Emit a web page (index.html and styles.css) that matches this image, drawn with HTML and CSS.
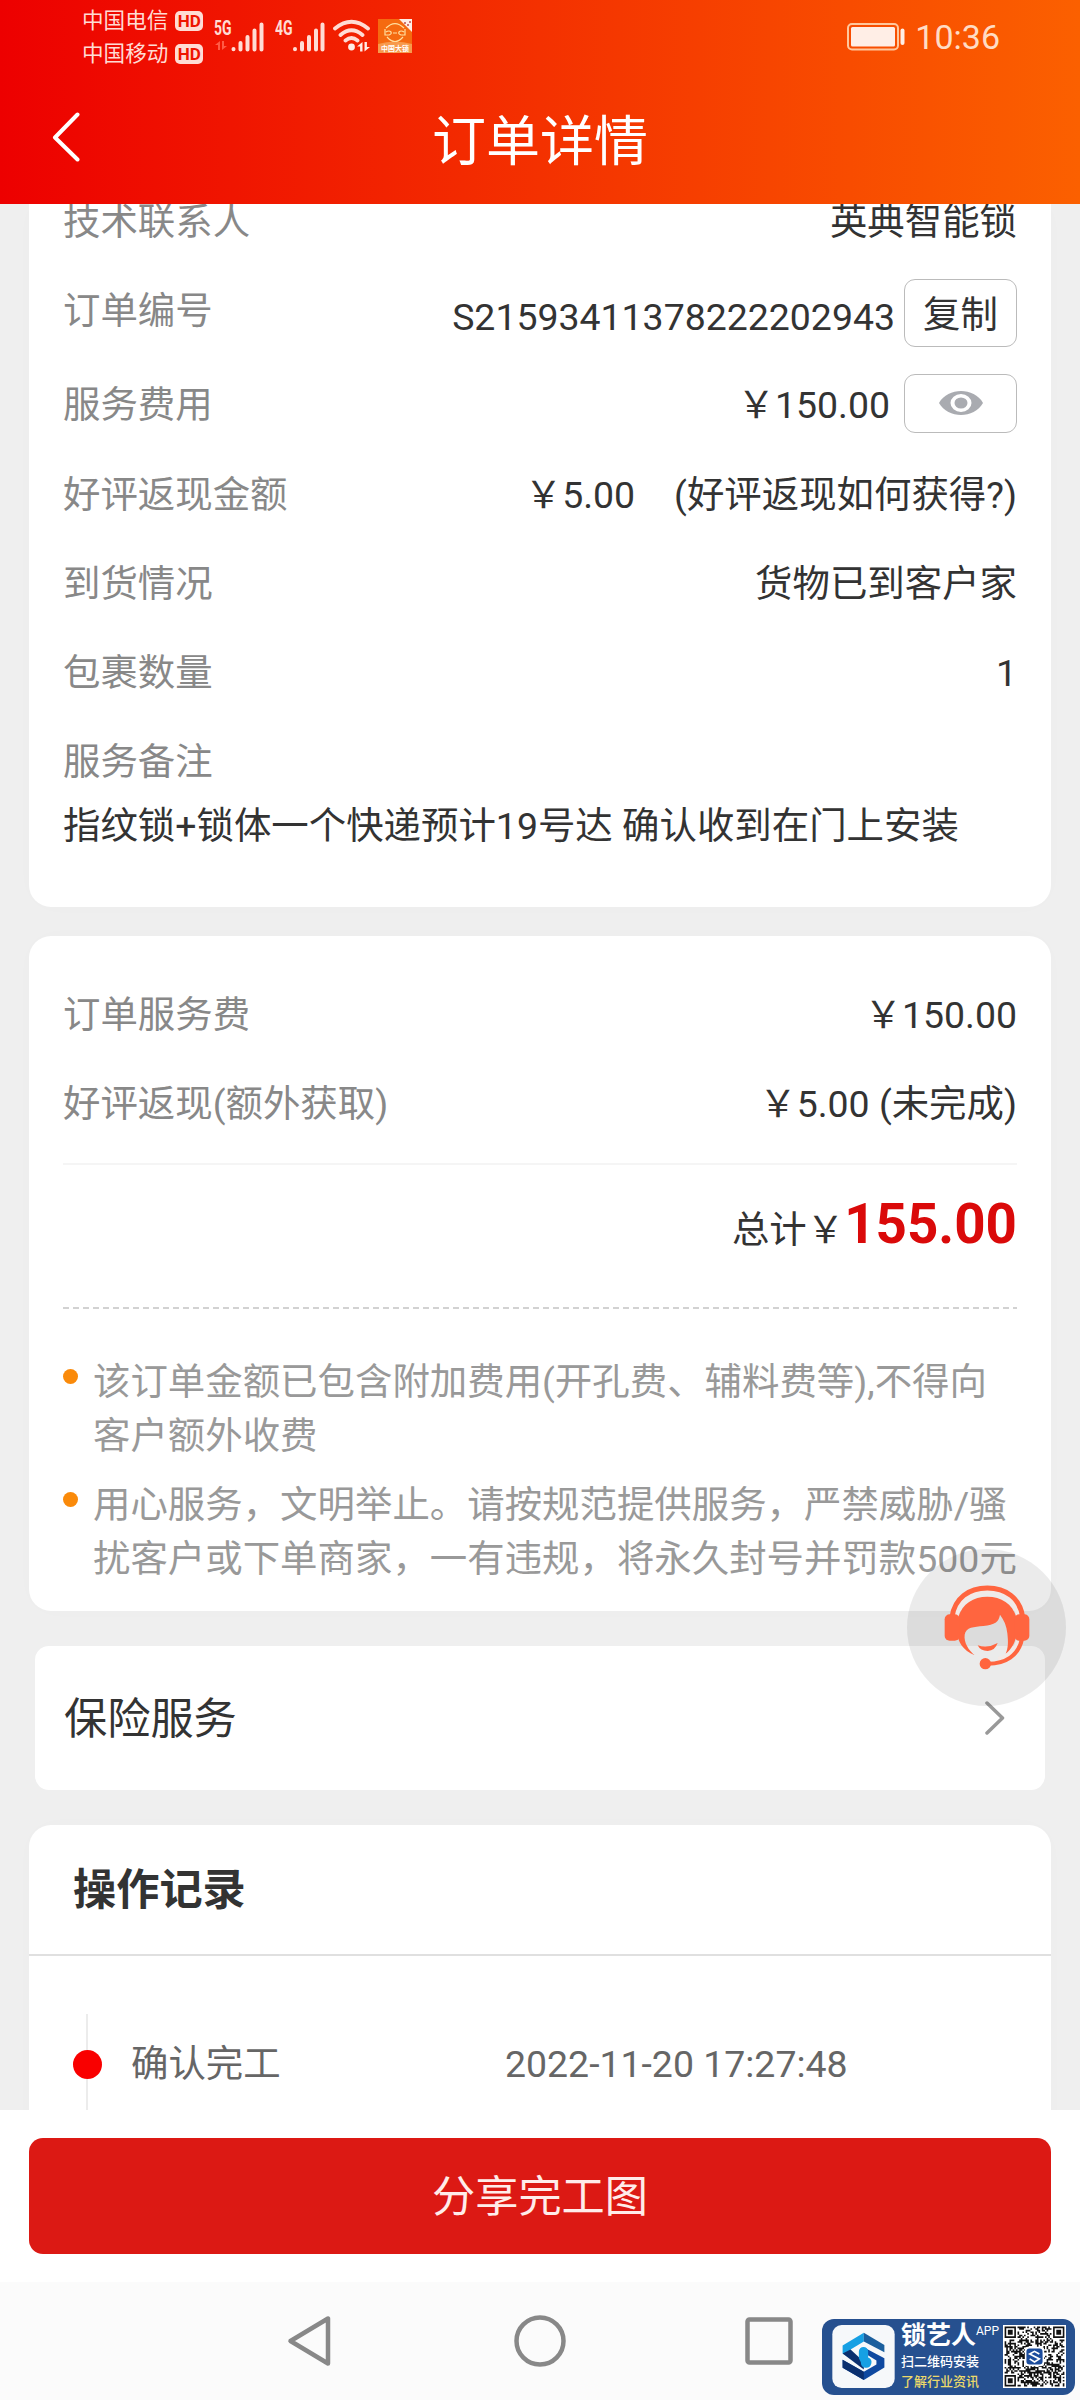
FILE: index.html
```html
<!DOCTYPE html>
<html lang="zh-CN">
<head>
<meta charset="utf-8">
<title>订单详情</title>
<link rel="stylesheet" href="styles.css">
</head>
<body>
<div class="phone">
  <header class="header">
    <div class="status">
      <div class="carriers">
        <div class="carrier">中国电信<span class="hd">HD</span></div>
        <div class="carrier">中国移动<span class="hd">HD</span></div>
      </div>
      <div class="signal">
        <span class="net">5G</span>
        <svg class="bars" width="50" height="32" viewBox="0 0 50 32">
          <g class="bar-line"><path d="M19.500 28v.3M26.500 22v6.500M33.500 16v12.500M40.500 9.500v19M47.500 3.500v25"/></g>
          <path class="data-faint" d="M6 20v9H4v-5H1zM8 29v-9h2v5h3z"/>
        </svg>
      </div>
      <div class="signal">
        <span class="net">4G</span>
        <svg class="bars" width="50" height="32" viewBox="0 0 50 32">
          <g class="bar-line"><path d="M20 28v.3M27 22v6.500M34 16v12.500M41 9.500v19M47.500 3.500v25"/></g>
        </svg>
      </div>
      <svg class="wifi" width="38" height="34" viewBox="0 0 38 34">
        <g class="wifi-arc"><path d="M2 10.500Q18.500-3 35 10.500M7.500 17q11-9.500 22 0M12.500 22.500q6-5 12 0"/></g>
        <circle class="light" cx="18.500" cy="29" r="3.400"/>
        <path class="light" d="M29.500 24v9.500h-2.400v-5H24zM31.500 33.500V24h2.400v5H37z"/>
      </svg>
      <svg class="app-mini" width="34" height="34" viewBox="0 0 34 34">
        <rect class="mini-bg" width="34" height="34"/>
        <path class="mini-strip" d="M0 25q17-5 34 0v9H0z"/>
        <path class="light" d="M21 0h13v13z"/>
        <g class="mini-line"><path d="M8 9q9-9 18 0M9 18q8 9 16 0M7 10v6h4q3-1 2-3-2-2-5 0M27 10v6h-4q-3-1-2-3 2-2 5 0M15 14h4"/></g>
        <path class="mini-dots" d="M26 3h2v2h-2zM29 5h2v2h-2zM31 2h2v2h-2z"/>
        <text class="mini-text" x="17" y="32" text-anchor="middle">中国大锁</text>
      </svg>
      <div class="status-right">
        <svg width="60" height="28" viewBox="0 0 60 28">
          <rect class="bat-case" x="1" y="1" width="50" height="25.500" rx="4"/>
          <rect class="light" x="4" y="4" width="44" height="19.500" rx="1.500"/>
          <rect class="light" x="53.500" y="5.500" width="4" height="16.500" rx="2"/>
        </svg>
        <span class="clock">10:36</span>
      </div>
    </div>
    <div class="titlebar">
      <svg class="back" width="28" height="50" viewBox="0 0 28 50"><path d="M25.500 2.500L3 25.500l22.500 22"/></svg>
      <h1 class="title">订单详情</h1>
    </div>
  </header>

  <main class="content">
    <section class="card info">
      <div class="row"><span class="label">技术联系人</span><span>英典智能锁</span></div>
      <div class="row row-no"><span class="label">订单编号</span><span class="value-group order-no"><span class="lowered">S21593411378222202943</span><button class="btn-copy">复制</button></span></div>
      <div class="row row-fee"><span class="label">服务费用</span><span class="value-group fee"><span>￥150.00</span><button class="btn-eye">
        <svg width="44" height="24" viewBox="0 0 44 28" preserveAspectRatio="none"><path class="eye" d="M0 14C9-4.500 35-4.500 44 14 35 32.500 9 32.500 0 14z"/><circle class="eye-ring" cx="22" cy="14" r="8.500"/></svg>
      </button></span></div>
      <div class="row"><span class="label">好评返现金额</span><span class="value-group cashback"><span>￥5.00</span><span>(好评返现如何获得?)</span></span></div>
      <div class="row"><span class="label">到货情况</span><span>货物已到客户家</span></div>
      <div class="row"><span class="label">包裹数量</span><span>1</span></div>
      <div class="row"><span class="label">服务备注</span></div>
      <p class="remark">指纹锁+锁体一个快递预计19号达 确认收到在门上安装</p>
    </section>

    <section class="card bill">
      <div class="row"><span class="label">订单服务费</span><span>￥150.00</span></div>
      <div class="row"><span class="label">好评返现(额外获取)</span><span>￥5.00 (未完成)</span></div>
      <div class="total"><span>总计￥</span><strong class="sum">155.00</strong></div>
      <div class="dashes"></div>
      <ul class="notes">
        <li>该订单金额已包含附加费用(开孔费、辅料费等),不得向<br>客户额外收费</li>
        <li>用心服务，文明举止。请按规范提供服务，严禁威胁/骚<br>扰客户或下单商家，一有违规，将永久封号并罚款500元</li>
      </ul>
    </section>

    <section class="insurance">
      <span>保险服务</span>
      <svg width="20" height="34" viewBox="0 0 20 34"><path class="chev" d="M2 2l15.500 15L2 32"/></svg>
    </section>

    <section class="card log">
      <h2 class="log-title">操作记录</h2>
      <div class="log-item">
        <span class="track"><i class="dot"></i></span>
        <span class="log-name">确认完工</span>
        <span>2022-11-20 17:27:48</span>
      </div>
    </section>
  </main>

  <footer class="action"><button class="share">分享完工图</button></footer>

  <nav class="nav">
    <svg width="48" height="54" viewBox="0 0 48 54"><path d="M4.500 27L42 4.500v45z"/></svg>
    <svg width="54" height="54" viewBox="0 0 54 54"><circle cx="27" cy="27" r="23.500"/></svg>
    <svg width="48" height="54" viewBox="0 0 48 54"><rect x="2.500" y="5.500" width="43" height="43" rx="2"/></svg>
  </nav>

  <div class="service">
    <svg width="86" height="86" viewBox="160 166 258 258">
      <path class="gap" d="M196 258Q215 190 290 184t94 74"/>
      <path class="band" d="M184 262C192 205 235 175 290 175s98 30 106 87"/>
      <path class="hot" d="M203 262C215 222 248 201 290 201s75 21 87 61v48c0 25-14 48-32 63 8-20 8-35 5-62-2-22-10-40-22-56-4 22-15 30-50 34-28 3-52 3-56 26-3 24 12 46 30 62-35-14-52-43-52-67z"/>
      <rect class="hot" x="162" y="254" width="45" height="79" rx="15"/>
      <rect class="hot" x="371" y="254" width="45" height="79" rx="15"/>
      <path class="gap" d="M383 334q-10 40-60 55"/>
      <path class="boom" d="M394 328c-10 48-48 76-108 74"/>
      <circle class="hot" cx="284" cy="402" r="17"/>
      <path class="hot" d="M261 347q30 10 60-7-8 23-30 24-22 0-30-17z"/>
    </svg>
  </div>

  <div class="promo">
    <svg class="promo-logo" width="63" height="63" viewBox="0 0 188 190">
      <rect class="logo-bg" width="188" height="190" rx="28"/>
      <path class="c1" d="M31 62L95 23v27L55 74v27L31 86z"/>
      <path class="c2" d="M95 23l62 37v22L95 50z"/>
      <path class="c3" d="M31 86l24-12 40 37v23z"/>
      <path class="c4" d="M100 70l57 30v28l-62 38-64-37v-24l64 36 38-22v-12l-33-20z"/>
      <path class="c3" d="M31 105l64 36v25l-64-37z"/>
      <path class="c1" d="M80 80a14 14 0 0128 0v18a16 16 0 11-22 14l-6-12z"/>
    </svg>
    <div class="promo-text">
      <div class="promo-name">锁艺人<sup>APP</sup></div>
      <div class="promo-scan">扫二维码安装</div>
      <div class="promo-news">了解行业资讯</div>
    </div>
    <svg class="qr" width="63" height="63" viewBox="-1 -1 39 39">
      <rect class="qr-bg" x="-1" y="-1" width="39" height="39"/>
      <path id="qr-modules" class="qr-ink"/>
      <rect class="qr-bg" x="12.500" y="12.500" width="12" height="12" rx="2"/>
      <rect class="qr-mark" x="13.500" y="13.500" width="10" height="10" rx="2"/>
      <path class="qr-line" d="M21.500 17l-3-1.700-3 1.700 6 3-3 1.900-3-1.900"/>
    </svg>
  </div>
</div>
<script src="qr.js"></script>
</body>
</html>
```
FILE: styles.css
```css
* { box-sizing: border-box; }
body {
  margin: 0;
  font-family: Roboto, "Noto Sans CJK SC", sans-serif;
  font-size: 37.44px;
  line-height: 44px;
  color: #333;
  background: #fff;
}
h1, h2, p, ul { margin: 0; padding: 0; font-weight: 400; }
button { font: inherit; color: inherit; background: #fff; border: 0; padding: 0; }
svg { display: block; flex: none; }

.phone {
  position: relative;
  width: 1080px;
  height: 2400px;
  overflow: hidden;
  display: flex;
  flex-direction: column;
}

/* header */
.header {
  height: 204px;
  flex: none;
  color: #fff;
  background: linear-gradient(90deg, #ed0000, #f43100 50%, #fb6000);
}
.status { height: 74px; padding: 4px 80px 0 82px; display: flex; align-items: flex-start; color: #ffdcd4; }
.carriers { width: 132px; flex: none; }
.carrier { height: 33px; display: flex; align-items: center; gap: 7px; font-size: 21.600px; line-height: 33px; }
.hd {
  width: 28px; height: 20px; border-radius: 5px;
  background: #ffdcd4; color: #ee1500;
  font-size: 17px; font-weight: 700; line-height: 20px; text-align: center;
}
.signal { width: 60.500px; height: 50px; flex: none; display: grid; }
.signal > * { grid-area: 1 / 1; }
.net { font-size: 20px; font-weight: 700; line-height: 20px; padding-top: 14px; transform: scaleX(.7); transform-origin: left; }
.bars { margin-top: 17px; }
.bar-line { fill: none; stroke: #ffdcd4; stroke-width: 4; stroke-linecap: round; }
.data-faint { fill: #ff5a45; }
.wifi { margin: 14px 0 0 -2px; }
.wifi-arc { fill: none; stroke: #ffdcd4; stroke-width: 3.800; stroke-linecap: round; }
.light { fill: #ffeee6; }
.app-mini { margin: 15px 0 0 7px; }
.mini-bg { fill: #f56a10; }
.mini-strip { fill: #f79a4c; }
.mini-line { fill: none; stroke: #ffe0a0; stroke-width: 1.200; }
.mini-dots { fill: #c77; }
.mini-text { fill: #fff; font-size: 7px; font-weight: 700; }
.status-right { margin: 15px 0 0 auto; display: flex; gap: 8px; align-items: flex-start; padding-top: 4px; }
.bat-case { fill: none; stroke: #ffc79c; stroke-width: 2; }
.clock { font-size: 34px; line-height: 28px; color: #ffdcc4; }
.titlebar { height: 130px; padding-left: 52px; display: grid; align-items: center; grid-template-columns: 28px 1fr 80px; }
.back { margin-bottom: 4px; fill: none; stroke: #fff; stroke-width: 4; stroke-linecap: round; stroke-linejoin: round; }
.title { font-size: 54px; line-height: 60px; padding-top: 8px; text-align: center; }

/* scrolled content */
.content {
  height: 1906px; flex: none; overflow: hidden;
  padding: 0 29px;
  background: #efefef;
}
.card { background: #fff; border-radius: 22px; padding: 0 34px; box-shadow: 0 0 28px rgba(0, 0, 0, .01); }
.row { height: 89px; display: flex; justify-content: space-between; align-items: center; white-space: nowrap; }
.label { color: #888; }
.value-group { display: flex; align-items: center; }
.info { display: flow-root; height: 703px; border-radius: 0 0 22px 22px; }
.info .row:first-child { margin-top: -27px; }
.info .row-no { height: 90px; }
.info .row-fee { height: 94px; }
.order-no { gap: 9px; padding-top: 4px; }
.lowered { padding-top: 7px; }
.fee { gap: 14px; }
.fee > span, .row-fee .label { padding-top: 3px; }
.cashback { gap: 39px; }
.btn-copy, .btn-eye { width: 113px; height: 68px; border: 1px solid #bbb; border-radius: 11px; }
.btn-copy { line-height: 64px; padding-top: 3px; }
.btn-eye { height: 59px; display: grid; place-items: center; }
.eye { fill: #a9abb0; }
.eye-ring { fill: #a9abb0; stroke: #fff; stroke-width: 4; }
.remark { line-height: 41px; white-space: nowrap; }

.bill { height: 675px; margin-top: 29px; padding-top: 34px; }
.total {
  height: 144px; margin-top: 15px; padding-top: 21px;
  border-top: 2px solid #f5f5f5;
  display: flex; justify-content: flex-end; align-items: baseline;
}
.sum { color: #da0a0a; font-size: 54.720px; line-height: 76px; }
.dashes { height: 2px; background: repeating-linear-gradient(90deg, #d2d2d2 0 6px, transparent 6px 10px); }
.notes { list-style: none; color: #999; line-height: 54px; padding-top: 46px; }
.notes li { display: block; padding-left: 30px; margin-bottom: 15px; white-space: nowrap; position: relative; }
.notes li::before {
  content: ""; position: absolute; left: 0; top: 14px;
  width: 15px; height: 15px; border-radius: 50%; background: #fa8a0a;
}

.insurance {
  height: 144px; margin: 35px 6px 0; padding: 0 40px 0 29px;
  border-radius: 14px; background: #fff;
  display: flex; justify-content: space-between; align-items: center;
  font-size: 43.200px;
}
.insurance > span { padding-top: 4px; }
.chev { fill: none; stroke: #999; stroke-width: 3.500; stroke-linecap: round; stroke-linejoin: round; }

.log { margin-top: 35px; height: 320px; padding: 0; }
.log-title { height: 131px; padding: 0 0 0 44px; border-bottom: 2px solid #e0e0e0; font-size: 43.200px; line-height: 132px; font-weight: 700; }
.log-item { margin: 58px 0 0 44px; height: 100px; display: flex; align-items: center; color: #666; }
.track { width: 29px; height: 100px; display: grid; place-items: center; background: linear-gradient(#ececec, #ececec) 13px 0 / 2px 100% no-repeat; }
.dot { width: 29px; height: 29px; border-radius: 50%; background: #f90000; }
.log-name { width: 374px; margin-left: 29px; }

/* bottom bars */
.action { height: 172px; flex: none; padding: 28px 29px; background: #fff; }
.share { width: 100%; height: 116px; border-radius: 14px; background: #dc1914; color: #ffecea; font-size: 43.200px; line-height: 112px; padding-top: 4px; }
.nav { height: 118px; flex: none; background: #fbfbfb; display: flex; align-items: center; justify-content: space-between; padding: 0 287px 0 286px; }
.nav svg { fill: none; stroke: #888; stroke-width: 4.500; stroke-linejoin: round; }

/* floating overlays */
.service {
  position: absolute; left: 907px; top: 1549px; width: 159px; height: 157px;
  border-radius: 50%; background: rgba(0, 0, 0, .08);
  display: grid; place-items: center;
}
.hot { fill: #ff653f; }
.band, .boom { fill: none; stroke: #ff653f; stroke-width: 15; }
.boom { stroke-width: 12; }
.gap { fill: none; stroke: #f3e9e6; stroke-width: 14; }
.promo {
  position: absolute; left: 822px; top: 2319px; width: 253px; height: 76px;
  border-radius: 12px; background: #26508f;
  display: flex; padding: 6px 0 0 10px;
}
.logo-bg { fill: #f6f8fa; }
.c1 { fill: #16a0e4; }
.c2 { fill: #1b5f9e; }
.c3 { fill: #0b2f6e; }
.c4 { fill: #0f49a0; }
.promo-text { width: 102px; margin-left: 6px; color: #fff; font-size: 13px; white-space: nowrap; font-weight: 500; }
.promo-name { font-size: 25px; font-weight: 700; line-height: 24px; height: 25px; display: flex; margin-top: -1px; }
.promo-name sup { font-size: 12px; font-weight: 400; line-height: 14px; }
.promo-scan { line-height: 20px; margin-top: 3px; }
.promo-news { line-height: 20px; color: #ecd96a; }
.qr-bg { fill: #fff; }
.qr-ink { fill: #111; }
.qr-mark { fill: #1c4c9c; }
.qr-line { fill: none; stroke: #fff; stroke-width: 1; }
```
FILE: qr.js
```js
// Builds the QR pattern: 37 x 37 modules with three finder squares.
const N = 37;
let seed = 20221120;
const next = () => {
  seed = (seed * 1103515245 + 12345) % 2147483648;
  return seed / 2147483648;
};
const finder = (x, y) => {
  const d = Math.max(Math.abs(x - 3), Math.abs(y - 3));
  return d <= 1 || d === 3;
};
let d = "";
for (let y = 0; y < N; y++) {
  for (let x = 0; x < N; x++) {
    const right = x >= N - 8, bottom = y >= N - 8;
    let on;
    if (x < 8 && y < 8) on = x < 7 && y < 7 && finder(x, y);
    else if (right && y < 8) on = x > N - 8 && y < 7 && finder(x - (N - 7), y);
    else if (x < 8 && bottom) on = x < 7 && y > N - 8 && finder(x, y - (N - 7));
    else on = next() < 0.5;
    if (on) d += `M${x} ${y}h1v1h-1z`;
  }
}
document.getElementById("qr-modules").setAttribute("d", d);
```
